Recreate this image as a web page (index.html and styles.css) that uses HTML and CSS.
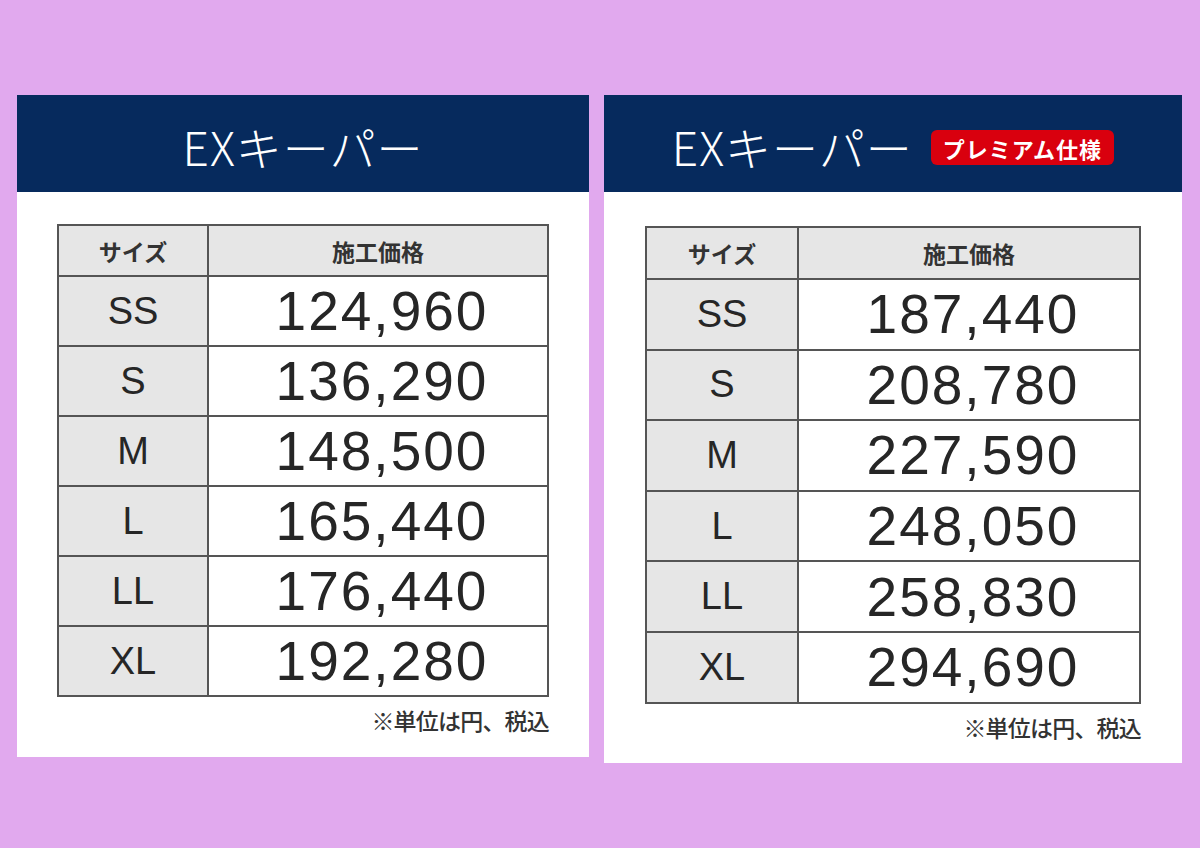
FILE: index.html
```html
<!DOCTYPE html>
<html lang="ja">
<head>
<meta charset="utf-8">
<title>EXキーパー 施工価格</title>
<link rel="stylesheet" href="styles.css">
</head>
<body>
<main class="page">
  <section class="card card-left">
    <header class="card-head">
      <h2 class="title">EXキーパー</h2>
    </header>
    <div class="card-body">
      <table class="price">
        <thead>
          <tr><th class="c-size">サイズ</th><th class="c-price">施工価格</th></tr>
        </thead>
        <tbody>
          <tr><td class="c-size">SS</td><td class="c-price">124,960</td></tr>
          <tr><td class="c-size">S</td><td class="c-price">136,290</td></tr>
          <tr><td class="c-size">M</td><td class="c-price">148,500</td></tr>
          <tr><td class="c-size">L</td><td class="c-price">165,440</td></tr>
          <tr><td class="c-size">LL</td><td class="c-price">176,440</td></tr>
          <tr><td class="c-size">XL</td><td class="c-price">192,280</td></tr>
        </tbody>
      </table>
      <p class="note">※単位は円、税込</p>
    </div>
  </section>
  <section class="card card-right">
    <header class="card-head">
      <h2 class="title">EXキーパー</h2>
      <span class="badge">プレミアム仕様</span>
    </header>
    <div class="card-body">
      <table class="price">
        <thead>
          <tr><th class="c-size">サイズ</th><th class="c-price">施工価格</th></tr>
        </thead>
        <tbody>
          <tr><td class="c-size">SS</td><td class="c-price">187,440</td></tr>
          <tr><td class="c-size">S</td><td class="c-price">208,780</td></tr>
          <tr><td class="c-size">M</td><td class="c-price">227,590</td></tr>
          <tr><td class="c-size">L</td><td class="c-price">248,050</td></tr>
          <tr><td class="c-size">LL</td><td class="c-price">258,830</td></tr>
          <tr><td class="c-size">XL</td><td class="c-price">294,690</td></tr>
        </tbody>
      </table>
      <p class="note">※単位は円、税込</p>
    </div>
  </section>
</main>
</body>
</html>
```

FILE: styles.css
```css
html, body {
  margin: 0;
  padding: 0;
}
body {
  width: 1200px;
  height: 848px;
  background: #e1a9ee;
  font-family: "Liberation Sans", "Noto Sans CJK JP", sans-serif;
  color: #222;
  overflow: hidden;
}
.page {
  display: flex;
  align-items: flex-start;
  gap: 15px;
  padding: 95px 0 0 17px;
}
.card {
  background: #fff;
  display: flex;
  flex-direction: column;
}
.card-left {
  width: 572px;
  height: 662px;
}
.card-right {
  width: 578px;
  height: 668px;
}
.card-head {
  height: 97px;
  background: #062a5d;
  display: flex;
  align-items: center;
  justify-content: center;
  gap: 18px;
}
.title {
  margin: 4px 0 0 0;
  color: #fff;
  font-family: "Noto Sans CJK JP", sans-serif;
  font-weight: 300;
  font-size: 46px;
  letter-spacing: 1px;
  line-height: 1;
}
.badge {
  display: inline-flex;
  align-items: center;
  height: 35px;
  padding: 0 12px;
  margin-top: 8px;
  background: #d9000e;
  color: #fff;
  border-radius: 6px;
  font-family: "Noto Sans CJK JP", sans-serif;
  font-weight: 700;
  font-size: 22px;
  letter-spacing: 1px;
}
.card-body {
  padding: 32px 0 0 40px;
}
.card-right .card-body {
  padding: 34px 0 0 41px;
}
.price {
  border-collapse: collapse;
  width: 492px;
  border: 2px solid #555;
}
.card-right .price {
  width: 496px;
}
.price th,
.price td {
  border: 2px solid #555;
  padding: 0;
  text-align: center;
  vertical-align: middle;
}
.price th {
  height: 49px;
  background: #e6e6e6;
  font-family: "Noto Sans CJK JP", sans-serif;
  font-weight: 700;
  font-size: 23px;
  color: #333;
}
.card-right .price th {
  height: 50px;
}
.price td {
  height: 68px;
}
.card-right .price td {
  height: 68.6px;
}
.price .c-size {
  width: 148px;
}
.card-right .price .c-size {
  width: 150px;
}
td.c-size {
  background: #e6e6e6;
  font-size: 38px;
  color: #262626;
}
td.c-price {
  background: #fff;
  font-size: 55px;
  letter-spacing: 2px;
  padding-left: 8px;
  color: #262626;
}
.note {
  margin: 6px 0 0 0;
  width: 492px;
  text-align: right;
  font-family: "Noto Sans CJK JP", sans-serif;
  font-size: 23px;
  font-weight: 500;
  letter-spacing: -0.8px;
  color: #333;
}
.card-right .note {
  width: 496px;
  margin-top: 6px;
}
```
